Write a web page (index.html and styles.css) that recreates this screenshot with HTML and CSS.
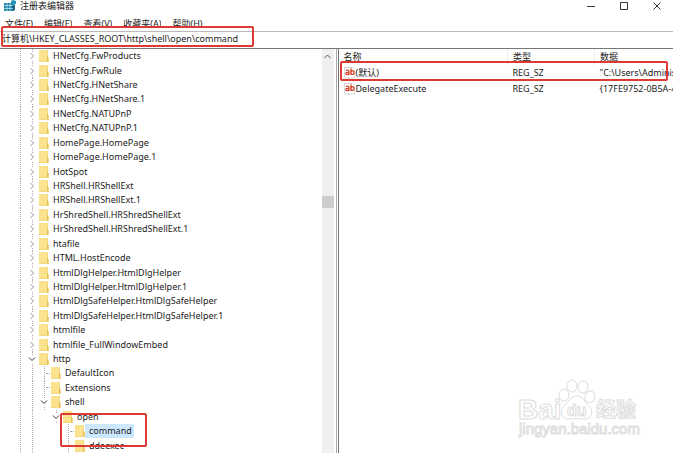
FILE: index.html
```
<!DOCTYPE html>
<html lang="zh-CN">
<head>
  <meta charset="UTF-8" />
  <title>注册表编辑器</title>
  <link rel="stylesheet" href="styles.css">
</head>
<body>
  <!-- Shared icons -->
  <svg class="sprite" aria-hidden="true">
    <symbol id="folder" viewBox="0 0 10 12">
      <path d="M0 0h9v7h1v5H0z" fill="#f6d87c" />
      <path d="M0 0h8v11H0z" fill="#fbe28f" />
      <path d="M8.500 6v5.500" stroke="#e3bd58" />
    </symbol>
    <symbol id="string" viewBox="0 0 12 12">
      <path d="M.5 .5h8l2 2v8.500H.5z" fill="#fff" stroke="#c4c4c4" stroke-dasharray="2 1" />
      <path d="M2 3.500c2-1 3 0 3 1v3.500M5 5.500c-2-.3-3.200.2-3.200 1.300s2.200 1.300 3.200 0" fill="none" stroke="#d23a22" stroke-width="1.200" />
      <path d="M7 1.500v6.500M7 4.500c1-1.300 3-1 3 1s-2 2.500-3 1.200" fill="none" stroke="#d23a22" stroke-width="1.300" />
    </symbol>
  </svg>

  <header class="titlebar">
    <svg class="app-icon" viewBox="0 0 12 12">
      <path d="M0 3h9v8H0z" fill="#1f86a8" />
      <path d="M8 4l3 1v5l-2 1H8z" fill="#1b6480" />
      <path d="M0 5.500h9M0 8.500h9M3 3v8M6 3v8" stroke="#c9ebf6" stroke-width=".7" />
      <path d="M7 1l2-1 3 1v3L9 5 7 4z" fill="#2792b7" />
    </svg>
    <h1 class="title">注册表编辑器</h1>
    <div class="window-buttons">
      <button class="window-button" aria-label="最小化"><svg viewBox="0 0 8 8"><path d="M0 4.500h8" /></svg></button>
      <button class="window-button" aria-label="最大化"><svg viewBox="0 0 8 8"><path d="M.5 .5h7v7h-7z" /></svg></button>
      <button class="window-button" aria-label="关闭"><svg viewBox="0 0 8 8"><path d="M.5 .5l7 7M7.500 .5l-7 7" /></svg></button>
    </div>
  </header>

  <nav class="menu">
    <button>文件(F)</button>
    <button>编辑(E)</button>
    <button>查看(V)</button>
    <button>收藏夹(A)</button>
    <button>帮助(H)</button>
  </nav>

  <div class="address">
    <input type="text" aria-label="地址" value="计算机\HKEY_CLASSES_ROOT\http\shell\open\command">
    <span class="mark"></span>
  </div>

  <main class="panes">
    <section class="tree-pane">
      <ul class="tree" id="tree"></ul>
      <div class="scrollbar">
        <svg class="scroll-arrow" viewBox="0 0 7 5"><path d="M.5 4l3-3 3 3" /></svg>
        <div class="thumb"></div>
      </div>
    </section>

    <section class="values">
      <table>
        <thead>
          <tr>
            <th class="col-name">名称</th>
            <th class="col-type">类型</th>
            <th>数据</th>
          </tr>
        </thead>
        <tbody>
          <tr>
            <td><svg class="value-icon"><use href="#string" /></svg>(默认)</td>
            <td>REG_SZ</td>
            <td>"C:\Users\Adminis</td>
          </tr>
          <tr>
            <td><svg class="value-icon"><use href="#string" /></svg>DelegateExecute</td>
            <td>REG_SZ</td>
            <td>{17FE9752-0B5A-4</td>
          </tr>
        </tbody>
      </table>
      <span class="mark"></span>
      <svg class="watermark" viewBox="0 0 124 66">
        <text class="brand" x="1" y="42">Bai</text>
        <ellipse cx="47" cy="18" rx="5" ry="6" />
        <ellipse cx="55" cy="9" rx="5" ry="6" />
        <ellipse cx="66" cy="10" rx="5" ry="6" transform="rotate(12 66 10)" />
        <ellipse cx="73" cy="20" rx="5" ry="6" transform="rotate(15 73 20)" />
        <path d="M60 19c6 0 8 6 12 10 5 5 3 13-5 13-5 0-9-1-14 0-8 1-11-7-6-13 4-4 7-10 13-10z" />
        <text class="brand-du" x="50" y="39">du</text>
        <text class="brand-cn" x="79" y="40">经验</text>
        <text class="brand-url" x="2" y="57">jingyan.baidu.com</text>
      </svg>
    </section>
  </main>

  <script src="tree.js"></script>
</body>
</html>
```

FILE: tree.js
```
// [depth, name, state]
const keys = [
  [0, "HNetCfg.FwProducts", "closed"],
  [0, "HNetCfg.FwRule", "closed"],
  [0, "HNetCfg.HNetShare", "closed"],
  [0, "HNetCfg.HNetShare.1", "closed"],
  [0, "HNetCfg.NATUPnP", "closed"],
  [0, "HNetCfg.NATUPnP.1", "closed"],
  [0, "HomePage.HomePage", "closed"],
  [0, "HomePage.HomePage.1", "closed"],
  [0, "HotSpot", "closed"],
  [0, "HRShell.HRShellExt", "closed"],
  [0, "HRShell.HRShellExt.1", "closed"],
  [0, "HrShredShell.HRShredShellExt", "closed"],
  [0, "HrShredShell.HRShredShellExt.1", "closed"],
  [0, "htafile", "closed"],
  [0, "HTML.HostEncode", "closed"],
  [0, "HtmlDlgHelper.HtmlDlgHelper", "closed"],
  [0, "HtmlDlgHelper.HtmlDlgHelper.1", "closed"],
  [0, "HtmlDlgSafeHelper.HtmlDlgSafeHelper", "closed"],
  [0, "HtmlDlgSafeHelper.HtmlDlgSafeHelper.1", "closed"],
  [0, "htmlfile", "closed"],
  [0, "htmlfile_FullWindowEmbed", "closed"],
  [0, "http", "open"],
  [1, "DefaultIcon", "leaf"],
  [1, "Extensions", "leaf"],
  [1, "shell", "open"],
  [2, "open", "open"],
  [3, "command", "leaf selected"],
  [3, "ddeexec", "leaf"]
];

const arrows = {
  closed: '<svg viewBox="0 0 8 8"><path d="M2.5 1l3 3-3 3" /></svg>',
  open: '<svg viewBox="0 0 8 8"><path d="M1 2.5l3 3 3-3" /></svg>'
};

document.getElementById("tree").innerHTML = keys.map(([depth, name, state]) => {
  // the root line and the top level line run the whole way down
  let guides = '<span class="guide line"></span>';
  for (let i = 0; i < depth; i++) {
    guides += `<span class="guide${i === 0 ? " line" : ""}"></span>`;
  }
  return `
    <li class="key ${state}">
      ${guides}<span class="guide line arrow">${arrows[state] || ""}</span>
      <svg class="folder"><use href="#folder" /></svg>
      <span class="key-name">${name}</span>
    </li>
  `;
}).join("") + '<li class="mark"></li>';
```

FILE: styles.css
```
* {
  box-sizing: border-box;
}

body {
  display: flex;
  flex-direction: column;
  height: 100vh;
  margin: 0;
  padding-right: 3px;
  overflow: hidden;
  background: #fff;
  color: #222;
  font-family: "Noto Sans", "Noto Sans CJK SC", sans-serif;
  font-size: 9px;
  line-height: 12px;
}

button, input {
  margin: 0;
  padding: 0;
  border: none;
  background: none;
  color: inherit;
  font: inherit;
}

svg {
  flex: none;
}

.sprite {
  position: absolute;
  width: 0;
  height: 0;
}

/* Title bar */
.titlebar {
  display: flex;
  align-items: center;
  flex: none;
  height: 11px;
  padding-left: 4px;
}

.app-icon {
  width: 12px;
  height: 12px;
}

.title {
  margin: 0 auto 0 4px;
  font-size: 9px;
  font-weight: normal;
}

.window-buttons {
  display: flex;
  gap: 25px;
  padding-right: 12px;
}

.window-button {
  display: flex;
}

.window-button svg {
  width: 8px;
  height: 8px;
  fill: none;
  stroke: #333;
}

/* Menu */
.menu {
  display: flex;
  gap: 11px;
  flex: none;
  height: 20px;
  padding: 7px 0 3px 5px;
}

.menu button {
  height: 10px;
  overflow: hidden;
}

/* Address bar */
.address {
  position: relative;
  flex: none;
  height: 17px;
  border-top: 1px solid #bbb;
}

.address input {
  display: block;
  width: 100%;
  height: 13px;
  padding-left: 2px;
  outline: none;
}

/* Red frames over the important parts */
.mark {
  position: absolute;
  border: 2px solid #dc3a34;
  border-radius: 2px;
}

.address .mark {
  top: -6px;
  left: 1px;
  width: 253px;
  height: 21px;
}

/* Panes */
.panes {
  display: flex;
  flex: 1;
  min-height: 0;
  border-top: 1px solid #777;
}

.tree-pane {
  display: flex;
  width: 50%;
  border-right: 1px solid #aaa;
}

.tree {
  position: relative;
  display: flex;
  flex-direction: column;
  flex: 1;
  margin: 0;
  padding: 0 0 0 14px;
  list-style: none;
}

.key {
  display: flex;
  align-items: center;
  flex: 1 1 0;
  min-height: 0;
}

.guide {
  display: flex;
  align-items: center;
  justify-content: center;
  align-self: stretch;
  width: 12px;
}

.guide.line {
  background: repeating-linear-gradient(#aaa 0 1px, transparent 1px 2px) 6px 0 / 1px 100% no-repeat;
}

/* keys without children get a short line to the folder */
.leaf .arrow::after {
  content: "";
  width: 4px;
  margin-left: 8px;
  border-top: 1px dotted #aaa;
}

.arrow svg {
  width: 8px;
  height: 8px;
  background: #fff;
  fill: none;
  stroke: #999;
}

.open .arrow svg {
  stroke: #333;
}

.folder {
  width: 10px;
  height: 12px;
  margin-left: 1px;
}

.key-name {
  padding: 0 2px;
  margin-left: 2px;
}

.selected .key-name {
  padding: 1px 2px 1px 4px;
  margin-left: 0;
  background: #cce8ff;
}

.tree .mark {
  bottom: 6px;
  left: 60px;
  width: 87px;
  height: 34px;
}

.scrollbar {
  width: 12px;
  margin-right: 2px;
  background: #f0f0f0;
}

.scroll-arrow {
  display: block;
  width: 7px;
  height: 5px;
  margin: 5px auto 0;
  fill: none;
  stroke: #555;
}

.thumb {
  height: 12px;
  margin-top: 137px;
  background: #cdcdcd;
}

/* Value list */
.values {
  position: relative;
  flex: 1;
  min-width: 0;
  margin-left: 1px;
  border-left: 1px solid #777;
}

table {
  width: 100%;
  table-layout: fixed;
  border-collapse: collapse;
}

th, td {
  height: 16px;
  padding: 0 0 0 5px;
  overflow: hidden;
  font-weight: normal;
  text-align: left;
  white-space: nowrap;
}

th + th {
  border-left: 1px solid #eee;
}

.col-name {
  width: 169px;
}

.col-type {
  width: 87px;
}

.value-icon {
  width: 12px;
  height: 12px;
  vertical-align: middle;
}

.values .mark {
  top: 12px;
  left: 1px;
  right: 5px;
  height: 20px;
}

/* Watermark */
.watermark {
  position: absolute;
  right: 32px;
  bottom: 10px;
  width: 124px;
  height: 66px;
  fill: #fff;
  stroke: #ddd;
  font-family: "Liberation Sans", "Noto Sans CJK SC", sans-serif;
  font-weight: bold;
}

.brand {
  font-size: 28px;
}

.brand-du {
  font-size: 16px;
}

.brand-cn {
  font-size: 20px;
}

.brand-url {
  font-size: 15px;
  font-weight: normal;
}
```
